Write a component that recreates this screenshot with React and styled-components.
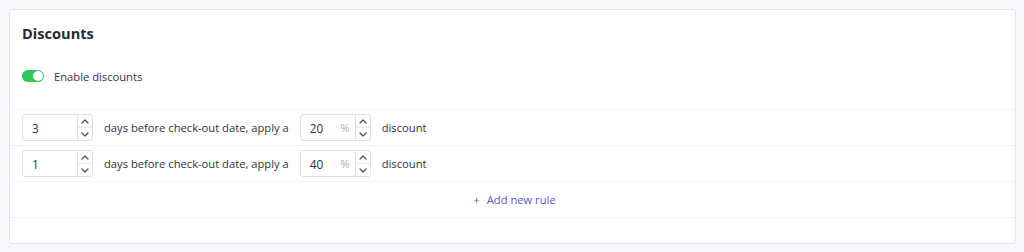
import React, { useState } from "react";
import styled, { createGlobalStyle } from "styled-components";

const GlobalStyle = createGlobalStyle`
  body {
    margin: 0;
    background: #f5f7fa;
    font-family: "Open Sans", "Noto Sans", sans-serif;
    color: #2d3340;
  }
`;

const rulesData = [
  { days: 3, percent: 20 },
  { days: 1, percent: 40 },
];

const Arrow = ({ up }) => (
  <svg width="8" height="5" viewBox="0 0 8 5">
    <path
      d={up ? "M1 4 L4 1 L7 4" : "M1 1 L4 4 L7 1"}
      fill="none"
      stroke="#4a4f5a"
      strokeWidth="1.2"
      strokeLinecap="round"
      strokeLinejoin="round"
    />
  </svg>
);

const NumberField = ({ value, unit }) => (
  <Field>
    <Value>{value}</Value>
    {unit && <Unit>{unit}</Unit>}
    <Spinner>
      <SpinButton>
        <Arrow up />
      </SpinButton>
      <SpinButton bottom>
        <Arrow />
      </SpinButton>
    </Spinner>
  </Field>
);

const App = () => {
  const [enabled, setEnabled] = useState(true);
  return (
    <Page>
      <GlobalStyle />
      <Card>
        <Header>
          <Title>Discounts</Title>
          <ToggleRow>
            <Toggle on={enabled} onClick={() => setEnabled(!enabled)}>
              <Knob on={enabled} />
            </Toggle>
            <Label>Enable discounts</Label>
          </ToggleRow>
        </Header>
        {rulesData.map((r, i) => (
          <Rule key={i}>
            <NumberField value={r.days} />
            <Text>days before check-out date, apply a</Text>
            <NumberField value={r.percent} unit="%" />
            <Text>discount</Text>
          </Rule>
        ))}
        <AddRow>
          <AddButton>
            <Plus>+</Plus>Add new rule
          </AddButton>
        </AddRow>
        <Footer />
      </Card>
    </Page>
  );
};

export default App;

const Page = styled.div`
  padding: 9px 8px 9px 9px;
`;

const Card = styled.div`
  background: #ffffff;
  border: 1px solid #e1e7ef;
  border-radius: 3px;
`;

const Header = styled.div`
  padding: 13px 12px 23px;
`;

const Title = styled.div`
  font-size: 14.6px;
  font-weight: 700;
  line-height: 20px;
  color: #262a33;
`;

const ToggleRow = styled.div`
  display: flex;
  align-items: center;
  margin-top: 23px;
  height: 20px;
`;

const Toggle = styled.div`
  width: 22px;
  height: 12px;
  border-radius: 6px;
  background: ${(p) => (p.on ? "#2fc65c" : "#c8ccd4")};
  position: relative;
  cursor: pointer;
`;

const Knob = styled.div`
  position: absolute;
  top: 1px;
  left: ${(p) => (p.on ? "11px" : "1px")};
  width: 10px;
  height: 10px;
  border-radius: 50%;
  background: #ffffff;
`;

const Label = styled.span`
  margin-left: 10px;
  font-size: 11.2px;
  color: #2d3340;
`;

const Rule = styled.div`
  display: flex;
  align-items: center;
  height: 35px;
  padding: 0 12px;
  border-top: 1px solid #f0f2f5;
`;

const Field = styled.div`
  display: flex;
  align-items: center;
  width: 71px;
  height: 27px;
  box-sizing: border-box;
  border: 1px solid #dde2e9;
  border-radius: 3px;
  background: #fff;
`;

const Value = styled.span`
  flex: 1;
  padding-left: 9px;
  font-size: 11.8px;
  color: #2d3340;
`;

const Unit = styled.span`
  font-size: 11.5px;
  color: #a9aeb8;
  margin-right: 5px;
`;

const Spinner = styled.div`
  display: flex;
  flex-direction: column;
  width: 14px;
  height: 100%;
  border-left: 1px solid #dde2e9;
`;

const SpinButton = styled.div`
  flex: 1;
  display: flex;
  align-items: center;
  justify-content: center;
  border-top: ${(p) => (p.bottom ? "1px solid #e6e9ee" : "none")};
`;

const Text = styled.span`
  font-size: 11.2px;
  color: #2d3340;
  margin: 0 11px;
`;

const AddRow = styled.div`
  display: flex;
  justify-content: center;
  align-items: center;
  height: 35px;
  border-top: 1px solid #f0f2f5;
`;

const AddButton = styled.span`
  font-size: 11.2px;
  color: #5b56d4;
  cursor: pointer;
  margin-left: 4px;
`;

const Plus = styled.span`
  margin-right: 7px;
`;

const Footer = styled.div`
  height: 25px;
  border-top: 1px solid #f0f2f5;
`;
